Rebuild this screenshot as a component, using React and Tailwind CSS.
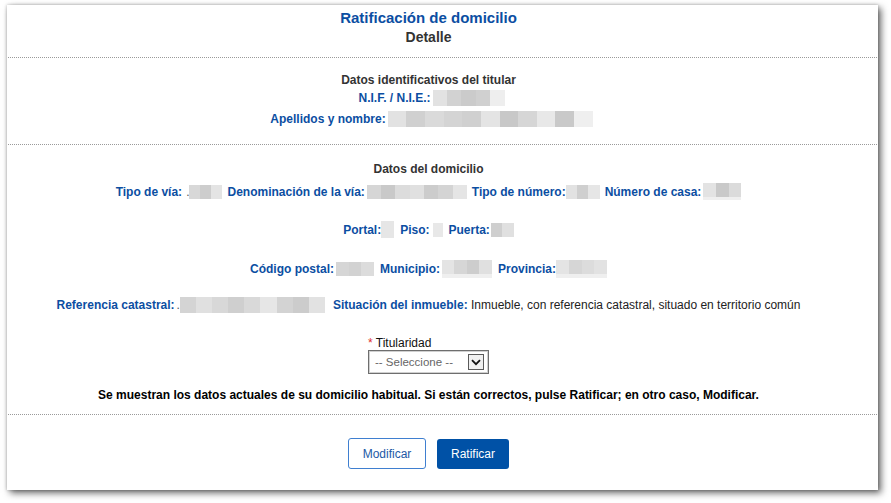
import React from "react";

const BLUE = "text-[#0b4ea2]";

function Blur({ w, h = "h-[14px]", cells }) {
  const list = cells || ["bg-[#d9d9d9]", "bg-[#cfcfcf]", "bg-[#e3e3e3]", "bg-[#d4d4d4]"];
  return (
    <span className={`inline-flex shrink-0 ${w} ${h}`}>
      {list.map((c, i) => (
        <span key={i} className={`flex-1 ${c}`} />
      ))}
    </span>
  );
}

function Field({ label, gap = "ml-[2px]", children }) {
  return (
    <span className="inline-flex items-center">
      <span className={`font-bold ${BLUE}`}>{label}</span>
      <span className={`inline-flex items-center ${gap}`}>{children}</span>
    </span>
  );
}

function Dotted({ mt }) {
  return <div className={`${mt} mx-[1px] border-t border-dotted border-[#9a9a9a]`} />;
}

export default function App() {
  return (
    <div
      className="w-[891px] h-[503px] bg-white pt-[5px] pl-[7px]"
      style={{ fontFamily: '"Liberation Sans", Arial, sans-serif' }}
    >
      <div className="w-[871px] h-[485px] bg-white shadow-[0_0_3px_rgba(0,0,0,0.25),3px_3px_7px_rgba(0,0,0,0.6)] pt-[4px]">
        {/* Cabecera */}
        <div className="w-[843px] text-center">
          <div className={`h-[18px] leading-[18px] text-[15px] font-bold ${BLUE}`}>
            Ratificación de domicilio
          </div>
          <div className="mt-[1px] h-[18px] leading-[18px] text-[14px] font-bold text-[#333]">
            Detalle
          </div>
        </div>

        <Dotted mt="mt-[11px]" />

        {/* Titular */}
        <div className="w-[843px] text-[12px] leading-[16px]">
          <div className="mt-[14px] text-center font-bold text-[#333]">
            Datos identificativos del titular
          </div>
          <div className="mt-[2px] pl-[6px] flex justify-center">
            <Field label="N.I.F. / N.I.E.:">
              <Blur
                w="w-[72px]"
                h="h-[16px]"
                cells={["bg-[#e2e2e2]", "bg-[#d2d2d2]", "bg-[#cbcbcb]", "bg-[#d0d0d0]", "bg-[#eeeeee]"]}
              />
            </Field>
          </div>
          <div className="mt-[5px] pl-[6px] flex justify-center">
            <Field label="Apellidos y nombre:">
              <Blur
                w="w-[205px]"
                h="h-[16px]"
                cells={[
                  "bg-[#e2e2e2]",
                  "bg-[#d0d0d0]",
                  "bg-[#dadada]",
                  "bg-[#d4d4d4]",
                  "bg-[#d0d0d0]",
                  "bg-[#e4e4e4]",
                  "bg-[#c8c8c8]",
                  "bg-[#d6d6d6]",
                  "bg-[#e8e8e8]",
                  "bg-[#c9c9c9]",
                  "bg-[#efefef]",
                ]}
              />
            </Field>
          </div>
        </div>

        <Dotted mt="mt-[17px]" />

        {/* Domicilio */}
        <div className="w-[843px] text-[12px] leading-[16px]">
          <div className="mt-[16px] text-center font-bold text-[#333]">Datos del domicilio</div>

          <div className="mt-[6px] flex justify-center items-center gap-[5px]">
            <Field label="Tipo de vía:" gap="ml-[4px]">
              <span className="text-[#555] leading-[14px]">.</span>
              <Blur w="w-[33px]" cells={["bg-[#d8d8d8]", "bg-[#cdcdcd]", "bg-[#e4e4e4]"]} />
            </Field>
            <Field label="Denominación de la vía:">
              <Blur
                w="w-[100px]"
                cells={["bg-[#d6d6d6]", "bg-[#c9c9c9]", "bg-[#dcdcdc]", "bg-[#e0e0e0]", "bg-[#cccccc]", "bg-[#d4d4d4]", "bg-[#e5e5e5]"]}
              />
            </Field>
            <Field label="Tipo de número:" gap="ml-0">
              <Blur w="w-[34px]" cells={["bg-[#e2e2e2]", "bg-[#cfcfcf]", "bg-[#e6e6e6]"]} />
            </Field>
            <Field label="Número de casa:" gap="ml-[2px]">
              <span className="inline-flex flex-col w-[38px]">
                <Blur w="w-[38px]" cells={["bg-[#e3e3e3]", "bg-[#c9c9c9]", "bg-[#dbdbdb]"]} />
                <span className="h-[3px] bg-[#efefef]" />
              </span>
            </Field>
          </div>

          <div className="mt-[21px] flex justify-center items-center gap-[6px]">
            <Field label="Portal:" gap="ml-0">
              <Blur w="w-[13px]" h="h-[17px]" cells={["bg-[#e6e6e6]"]} />
            </Field>
            <Field label="Piso:" gap="ml-[3px]">
              <Blur w="w-[10px]" cells={["bg-[#e8e8e8]"]} />
            </Field>
            <Field label="Puerta:" gap="ml-[1px]">
              <Blur w="w-[23px]" cells={["bg-[#cfcfcf]", "bg-[#e0e0e0]"]} />
            </Field>
          </div>

          <div className="mt-[22px] flex justify-center items-center gap-[6px]">
            <Field label="Código postal:">
              <Blur w="w-[38px]" cells={["bg-[#d6d6d6]", "bg-[#d2d2d2]", "bg-[#dcdcdc]"]} />
            </Field>
            <Field label="Municipio:">
              <span className="inline-flex flex-col w-[50px]">
                <Blur w="w-[50px]" cells={["bg-[#e4e4e4]", "bg-[#d6d6d6]", "bg-[#cdcdcd]", "bg-[#e0e0e0]"]} />
                <span className="h-[4px] bg-[#efefef]" />
              </span>
            </Field>
            <Field label="Provincia:" gap="ml-0">
              <span className="inline-flex flex-col w-[51px]">
                <Blur w="w-[51px]" cells={["bg-[#e4e4e4]", "bg-[#d6d6d6]", "bg-[#dcdcdc]", "bg-[#e2e2e2]"]} />
                <span className="h-[4px] bg-[#efefef]" />
              </span>
            </Field>
          </div>

          <div className="mt-[19px] flex justify-center items-center gap-[8px]">
            <Field label="Referencia catastral:">
              <span className="text-[#555] leading-[14px]">.</span>
              <Blur
                w="w-[145px]"
                h="h-[16px]"
                cells={[
                  "bg-[#d4d4d4]",
                  "bg-[#e0e0e0]",
                  "bg-[#d8d8d8]",
                  "bg-[#cfcfcf]",
                  "bg-[#d9d9d9]",
                  "bg-[#e6e6e6]",
                  "bg-[#d3d3d3]",
                  "bg-[#cccccc]",
                  "bg-[#e2e2e2]",
                ]}
              />
            </Field>
            <span>
              <span className={`font-bold ${BLUE}`}>Situación del inmueble:</span>
              <span className="text-[#222]"> Inmueble, con referencia catastral, situado en territorio común</span>
            </span>
          </div>

          {/* Titularidad */}
          <div className="mt-[23px] flex justify-center">
            <div className="w-[121px]">
              <div className="h-[14px] leading-[14px] text-[#111]">
                <span className="text-[#e03030]">*</span> Titularidad
              </div>
              <div className="h-[24px] border border-[#6e6e6e] shadow-[inset_0_0_0_1px_#d0d0d0] bg-white flex items-center justify-between pl-[6px] pr-[4px]">
                <span className="text-[11.5px] text-[#666]">-- Seleccione --</span>
                <span className="w-[16px] h-[16px] border border-[#5a5a5a] bg-[#f0f0f0] flex items-center justify-center">
                  <svg width="10" height="7" viewBox="0 0 10 7">
                    <path d="M1 1.2 L5 5.2 L9 1.2" fill="none" stroke="#111" strokeWidth="1.8" />
                  </svg>
                </span>
              </div>
            </div>
          </div>

          <div className="mt-[13px] text-center font-bold text-black">
            Se muestran los datos actuales de su domicilio habitual. Si están correctos, pulse Ratificar; en otro caso, Modificar.
          </div>
        </div>

        <Dotted mt="mt-[11px]" />

        {/* Botones */}
        <div className="w-[843px] mt-[23px] flex justify-center gap-[11px] text-[12px]">
          <button className="w-[78px] h-[31px] rounded-[3px] border border-[#3f7fd0] bg-white text-[#1d59a6]">
            Modificar
          </button>
          <button className="w-[72px] h-[30px] mt-[1px] rounded-[3px] bg-[#0051a6] text-white">
            Ratificar
          </button>
        </div>
      </div>
    </div>
  );
}
